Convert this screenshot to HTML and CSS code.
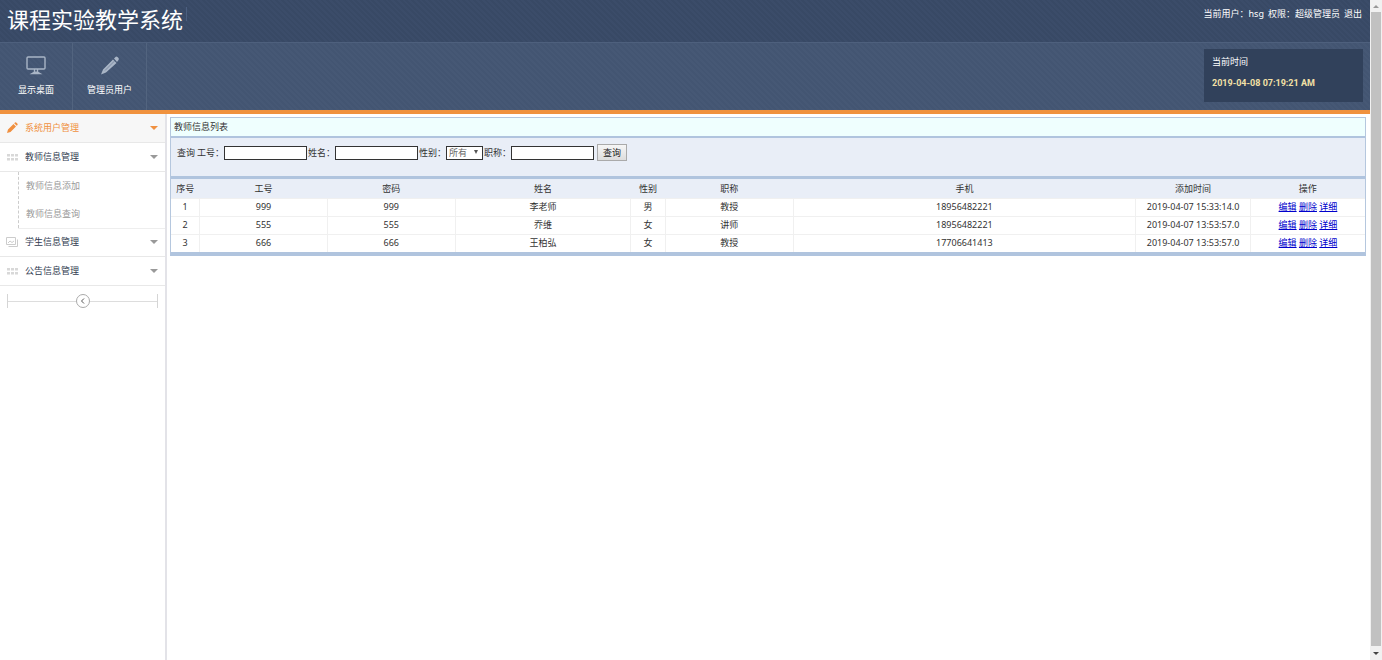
FILE: index.html
```
<!DOCTYPE html>
<html lang="zh-CN">
<head>
    <meta charset="utf-8">
    <title>课程实验教学系统</title>
    <link rel="stylesheet" href="styles.css">
</head>
<body>

<div class="page">
    <header class="header">
        <div class="header-top">
            <h1 class="logo">课程实验教学系统</h1>
            <div class="user-info">
                <span>当前用户：hsg</span>
                <span>权限：超级管理员</span>
                <a href="#">退出</a>
            </div>
        </div>
        <div class="toolbar">
            <nav class="shortcuts">
                <a href="#" class="shortcut">
                    <svg width="20" height="19" viewBox="0 0 20 19" fill="none" stroke="#a9b5c6" stroke-width="1.4">
                        <rect x="1" y="1" width="18" height="12" rx="1"/>
                        <path d="M8.5 13v3M11.5 13v3"/>
                        <path d="M6 17.500q4-2.500 8 0z"/>
                    </svg>
                    <span>显示桌面</span>
                </a>
                <a href="#" class="shortcut">
                    <svg width="20" height="19" viewBox="0 0 20 19" fill="#a9b5c6">
                        <path d="M1 18.500l2-5L13 3.500l3.500 3.500L6 16.500zM14 2.500l1.500-1.500q1-.8 2 0l1 1q.8 1 0 2L17 6z"/>
                        <path d="M5 14.500L14.500 5" stroke="#71819a" stroke-width=".8"/>
                    </svg>
                    <span>管理员用户</span>
                </a>
            </nav>
            <div class="clock">
                <div>当前时间</div>
                <div class="clock-time">2019-04-08 07:19:21 AM</div>
            </div>
        </div>
    </header>

    <div class="main">
        <aside class="sidebar">
            <ul class="menu">
                <li>
                    <a href="#" class="menu-item active">
                        <svg width="12" height="12" viewBox="0 0 12 12" fill="#f09040">
                            <path d="M1 11l1-3.500L7.500 2 10 4.500 4.500 10zM8.200 1.300l.8-.8q.6-.4 1.200 0l1.300 1.300q.4.6 0 1.200l-.8.8z"/>
                        </svg>
                        <span>系统用户管理</span>
                        <i class="arrow"></i>
                    </a>
                </li>
                <li>
                    <a href="#" class="menu-item">
                        <svg width="12" height="12" viewBox="0 0 12 12" fill="#d8d8d8">
                            <path d="M1 3h3v2.500H1zM5 3h3v2.500H5zM9 3h3v2.500H9zM1 7h3v2.500H1zM5 7h3v2.500H5zM9 7h3v2.500H9z"/>
                        </svg>
                        <span>教师信息管理</span>
                        <i class="arrow"></i>
                    </a>
                    <ul class="submenu">
                        <li><a href="#">教师信息添加</a></li>
                        <li><a href="#">教师信息查询</a></li>
                    </ul>
                </li>
                <li>
                    <a href="#" class="menu-item">
                        <svg width="12" height="12" viewBox="0 0 12 12" fill="none" stroke="#ccc">
                            <path d="M.5 1.500h9v7h-9zM2.500 10.500h9v-7M2 7l2-2 2 1.500L8 5"/>
                        </svg>
                        <span>学生信息管理</span>
                        <i class="arrow"></i>
                    </a>
                </li>
                <li>
                    <a href="#" class="menu-item">
                        <svg width="12" height="12" viewBox="0 0 12 12" fill="#d8d8d8">
                            <path d="M1 3h3v2.500H1zM5 3h3v2.500H5zM9 3h3v2.500H9zM1 7h3v2.500H1zM5 7h3v2.500H5zM9 7h3v2.500H9z"/>
                        </svg>
                        <span>公告信息管理</span>
                        <i class="arrow"></i>
                    </a>
                </li>
            </ul>
            <div class="collapse">
                <button type="button" class="collapse-btn" aria-label="收起">
                    <svg width="6" height="6" viewBox="0 0 6 6" fill="none" stroke="#555"><path d="M4 .5L1.500 3 4 5.500"/></svg>
                </button>
            </div>
        </aside>

        <section class="content">
            <div class="panel">
                <h2 class="panel-title">教师信息列表</h2>
                <form class="search">
                    <span class="search-label">查询</span>
                    <label for="gh">工号：</label><input type="text" id="gh">
                    <label for="xm">姓名：</label><input type="text" id="xm">
                    <label for="xb">性别：</label>
                    <span class="select-box"><select id="xb"><option>所有</option><option>男</option><option>女</option></select></span>
                    <label for="zc">职称：</label><input type="text" id="zc">
                    <button type="submit">查询</button>
                </form>
                <table class="list">
                    <colgroup>
                        <col class="col-no">
                        <col class="col-mid">
                        <col class="col-mid">
                        <col class="col-name">
                        <col class="col-sex">
                        <col class="col-mid">
                        <col>
                        <col class="col-time">
                        <col class="col-time">
                    </colgroup>
                    <thead>
                        <tr>
                            <th>序号</th>
                            <th>工号</th>
                            <th>密码</th>
                            <th>姓名</th>
                            <th>性别</th>
                            <th>职称</th>
                            <th>手机</th>
                            <th>添加时间</th>
                            <th>操作</th>
                        </tr>
                    </thead>
                    <tbody>
                        <tr>
                            <td>1</td>
                            <td>999</td>
                            <td>999</td>
                            <td>李老师</td>
                            <td>男</td>
                            <td>教授</td>
                            <td>18956482221</td>
                            <td>2019-04-07 15:33:14.0</td>
                            <td><a href="#">编辑</a> <a href="#">删除</a> <a href="#">详细</a></td>
                        </tr>
                        <tr>
                            <td>2</td>
                            <td>555</td>
                            <td>555</td>
                            <td>乔维</td>
                            <td>女</td>
                            <td>讲师</td>
                            <td>18956482221</td>
                            <td>2019-04-07 13:53:57.0</td>
                            <td><a href="#">编辑</a> <a href="#">删除</a> <a href="#">详细</a></td>
                        </tr>
                        <tr>
                            <td>3</td>
                            <td>666</td>
                            <td>666</td>
                            <td>王柏弘</td>
                            <td>女</td>
                            <td>教授</td>
                            <td>17706641413</td>
                            <td>2019-04-07 13:53:57.0</td>
                            <td><a href="#">编辑</a> <a href="#">删除</a> <a href="#">详细</a></td>
                        </tr>
                    </tbody>
                </table>
            </div>
        </section>
    </div>
</div>

<div class="scrollbar">
    <i class="scroll-up"></i>
    <div class="scroll-thumb"></div>
    <i class="scroll-down"></i>
</div>

</body>
</html>
```
FILE: styles.css
```
* {
    box-sizing: border-box;
}
body {
    display: flex;
    min-height: 100vh;
    margin: 0;
    background: #fff;
    color: #333;
    font-family: "Noto Sans", "Noto Sans CJK SC", sans-serif;
    font-size: 9px;
    line-height: 14px;
}
ul {
    margin: 0;
    padding: 0;
    list-style: none;
}
svg {
    display: block;
}
.page {
    display: flex;
    flex-direction: column;
    flex: 1;
}

/* 顶部 */
.header {
    border-bottom: 4px solid #f0923e;
    color: #fff;
    background: #445673;
}
.header a {
    color: #fff;
    text-decoration: none;
}
.header-top {
    display: flex;
    justify-content: space-between;
    align-items: flex-start;
    height: 42px;
    padding: 7px 8px 0 7px;
    background: repeating-linear-gradient(45deg, #384965 0 2px, #3b4c69 2px 4px);
}
.logo {
    margin: 0;
    padding-right: 4px;
    font-size: 22px;
    font-weight: normal;
    line-height: 24px;
    background: linear-gradient(#4c5f80, #4c5f80) right top / 1px 14px no-repeat;
}
.user-info {
    display: flex;
    gap: 4px;
}
.toolbar {
    display: flex;
    justify-content: space-between;
    height: 68px;
    border-top: 1px solid #4e607d;
    background: repeating-linear-gradient(45deg, #435572 0 2px, #465875 2px 4px);
}
.shortcuts {
    display: flex;
}
.shortcut {
    display: flex;
    flex-direction: column;
    align-items: center;
    gap: 8px;
    width: 73px;
    padding-top: 13px;
    border-right: 1px solid #52647f;
}
.shortcut + .shortcut {
    width: 74px;
}
.clock {
    width: 159px;
    height: 53px;
    margin: 6px 7px 0 0;
    padding: 6px 8px;
    background: #31415b;
}
.clock-time {
    margin-top: 7px;
    color: #f3e0a6;
    font-family: Roboto, sans-serif;
    font-size: 9px;
    font-weight: bold;
}

/* 左侧菜单 */
.main {
    display: flex;
    flex: 1;
}
.sidebar {
    width: 167px;
    border-right: 2px solid #e3e3e8;
}
.menu-item {
    display: flex;
    align-items: center;
    height: 29px;
    padding: 0 7px 0 6px;
    border-bottom: 1px solid #e8e8e8;
    color: #2f3b50;
    text-decoration: none;
}
.menu-item span {
    flex: 1;
    padding-left: 7px;
}
.menu-item.active {
    background: #f7f7f7;
    color: #f09040;
}
.arrow {
    border: 4px solid transparent;
    border-top-color: #999;
    border-bottom: 0;
}
.active .arrow {
    border-top-color: #f09040;
}
.submenu {
    margin-left: 18px;
    border-left: 1px dashed #ccc;
    box-shadow: 0 1px 0 #eee;
}
.submenu a {
    display: block;
    padding: 7px 0 7px 7px;
    color: #999;
    text-decoration: none;
}
.collapse {
    display: flex;
    justify-content: center;
    align-items: center;
    height: 14px;
    margin: 8px 7px;
    border: solid #d5d5d5;
    border-width: 0 1px;
    background: linear-gradient(#ddd, #ddd) center / 100% 1px no-repeat;
}
.collapse-btn {
    display: flex;
    justify-content: center;
    align-items: center;
    width: 14px;
    height: 14px;
    padding: 0;
    border: 1px solid #aaa;
    border-radius: 50%;
    background: #fff;
}

/* 列表 */
.content {
    flex: 1;
    padding: 3px 4px 0 3px;
}
.panel {
    border: 1px solid #b5c7de;
    border-bottom: 4px solid #b0c4de;
}
.panel-title {
    margin: 0;
    padding: 2px 3px;
    border-bottom: 2px solid #b0c4de;
    background: #effffe;
    font-size: 9px;
    font-weight: normal;
}
.search {
    display: flex;
    align-items: center;
    padding: 6px 6px 15px;
    border-bottom: 3px solid #b0c4de;
    background: #e9eef7;
}
.search-label {
    margin-right: 2px;
}
.search input {
    width: 83px;
    height: 14px;
    margin-right: 1px;
    padding: 0 2px;
    border: 1px solid #333;
    background: #fff;
    font: inherit;
}
.select-box {
    position: relative;
    margin-right: 1px;
}
.select-box::after {
    content: "";
    position: absolute;
    top: 4px;
    right: 5px;
    border: 2px solid transparent;
    border-top: 4px solid #555;
    border-bottom: 0;
    pointer-events: none;
}
.search select {
    display: block;
    width: 37px;
    height: 14px;
    padding: 0 2px;
    border: 1px solid #333;
    border-radius: 0;
    background: #fff;
    color: #666;
    font: inherit;
    line-height: 12px;
    appearance: none;
}
.search button {
    width: 30px;
    height: 17px;
    margin-left: 2px;
    padding: 0;
    border: 1px solid #aaa;
    background: linear-gradient(#f6f6f6, #ddd);
    color: #222;
    font: inherit;
}
.list {
    width: 100%;
    border-collapse: collapse;
    table-layout: fixed;
}
.list th,
.list td {
    height: 18px;
    padding: 0;
    font-weight: normal;
    text-align: center;
    white-space: nowrap;
}
.list th {
    height: 19px;
    padding-top: 2px;
    background: #e9eef7;
}
.list td {
    border: 1px solid #f0f0f0;
    border-width: 1px 1px 0 0;
}
.list td:last-child {
    border-right: 0;
}
.list a {
    color: #0000cc;
}
.col-no {
    width: 2.4%;
}
.col-mid {
    width: 10.7%;
}
.col-name {
    width: 14.7%;
}
.col-sex {
    width: 2.9%;
}
.col-time {
    width: 9.6%;
}

/* 滚动条 */
.scrollbar {
    display: flex;
    flex-direction: column;
    align-items: center;
    justify-content: space-between;
    width: 12px;
    padding: 5px 0;
    background: #f1f1f1;
}
.scroll-thumb {
    flex: 1;
    width: 10px;
    margin: 4px 0 6px;
    background: #c1c1c1;
}
.scroll-up,
.scroll-down {
    border: 3px solid transparent;
}
.scroll-up {
    border-top: 0;
    border-bottom-color: #999;
}
.scroll-down {
    border-top-color: #444;
    border-bottom: 0;
}
```
